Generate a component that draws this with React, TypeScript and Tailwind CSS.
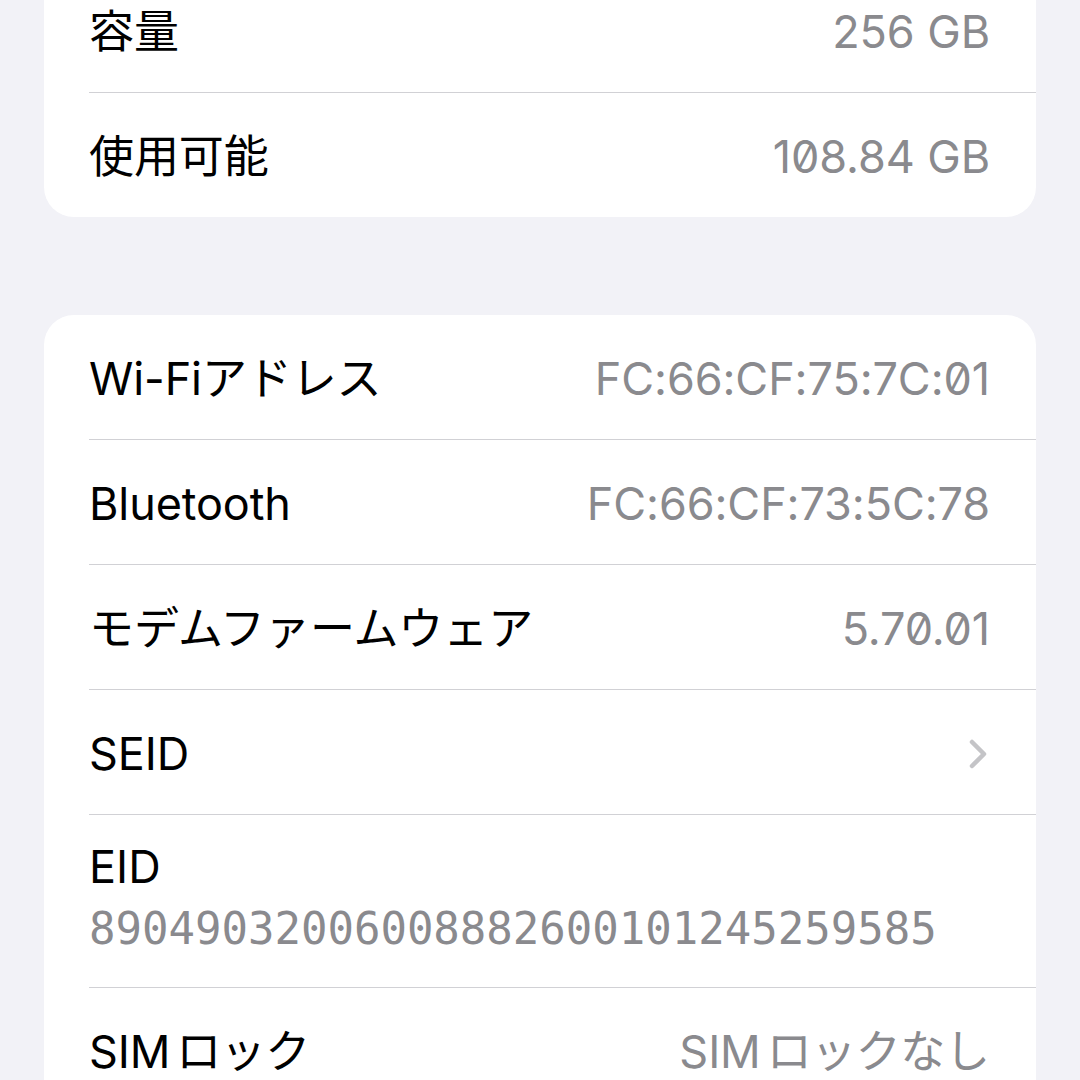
const font = { fontFamily: '"Inter", "Noto Sans CJK JP", sans-serif' };

type Row = { label: string; value?: string; chevron?: boolean };

const storage: Row[] = [
  { label: "容量", value: "256 GB" },
  { label: "使用可能", value: "108.84 GB" },
];

const network: Row[] = [
  { label: "Wi-Fiアドレス", value: "FC:66:CF:75:7C:01" },
  { label: "Bluetooth", value: "FC:66:CF:73:5C:78" },
  { label: "モデムファームウェア", value: "5.70.01" },
  { label: "SEID", chevron: true },
];

function Chevron() {
  return (
    <svg width="20" height="32" viewBox="0 0 20 32" fill="none" className="mr-[2px]">
      <path d="M4 4 L16 16 L4 28" stroke="#c4c4c7" strokeWidth="4.5" strokeLinecap="round" strokeLinejoin="round" />
    </svg>
  );
}

function Sim() {
  return (
    <>
      SIM<span className="ml-[6px] tracking-[-0.5px]">ロック</span>
    </>
  );
}

function Line({ row, sim }: { row: Row; sim?: boolean }) {
  return (
    <div className="flex h-[124px] items-center justify-between pr-[46px] pt-[4px]">
      <span className="text-[45px] text-black tracking-[-0.1px]">{sim ? <Sim /> : row.label}</span>
      {row.value && (
        <span className="text-[45px] text-[#8a8a8e] slashed-zero tracking-[-0.1px]">
          {sim ? (
            <>
              <Sim />なし
            </>
          ) : (
            row.value
          )}
        </span>
      )}
      {row.chevron && <Chevron />}
    </div>
  );
}

function Sep() {
  return <div className="h-px bg-[#d1d1d5]" />;
}

export default function App() {
  return (
    <div className="h-[1080px] w-[1080px] overflow-hidden bg-[#f2f2f7]" style={font}>
      <div className="mx-[44px] -mt-[32px] rounded-[30px] bg-white pl-[45px]">
        <Line row={storage[0]} />
        <Sep />
        <Line row={storage[1]} />
      </div>

      <div className="mx-[44px] mt-[98px] rounded-[30px] bg-white pl-[45px]">
        {network.map((r) => (
          <div key={r.label}>
            <Line row={r} />
            <Sep />
          </div>
        ))}
        <div className="flex h-[172px] flex-col justify-center pb-[6px]">
          <span className="text-[45px] leading-[56px] text-black">EID</span>
          <span
            className="mt-[6px] text-[44px] leading-[56px] text-[#8a8a8e]"
            style={{ fontFamily: '"DejaVu Sans Mono", monospace' }}
          >
            89049032006008882600101245259585
          </span>
        </div>
        <Sep />
        <Line row={{ label: "SIMロック", value: "SIMロックなし" }} sim />
      </div>
    </div>
  );
}
